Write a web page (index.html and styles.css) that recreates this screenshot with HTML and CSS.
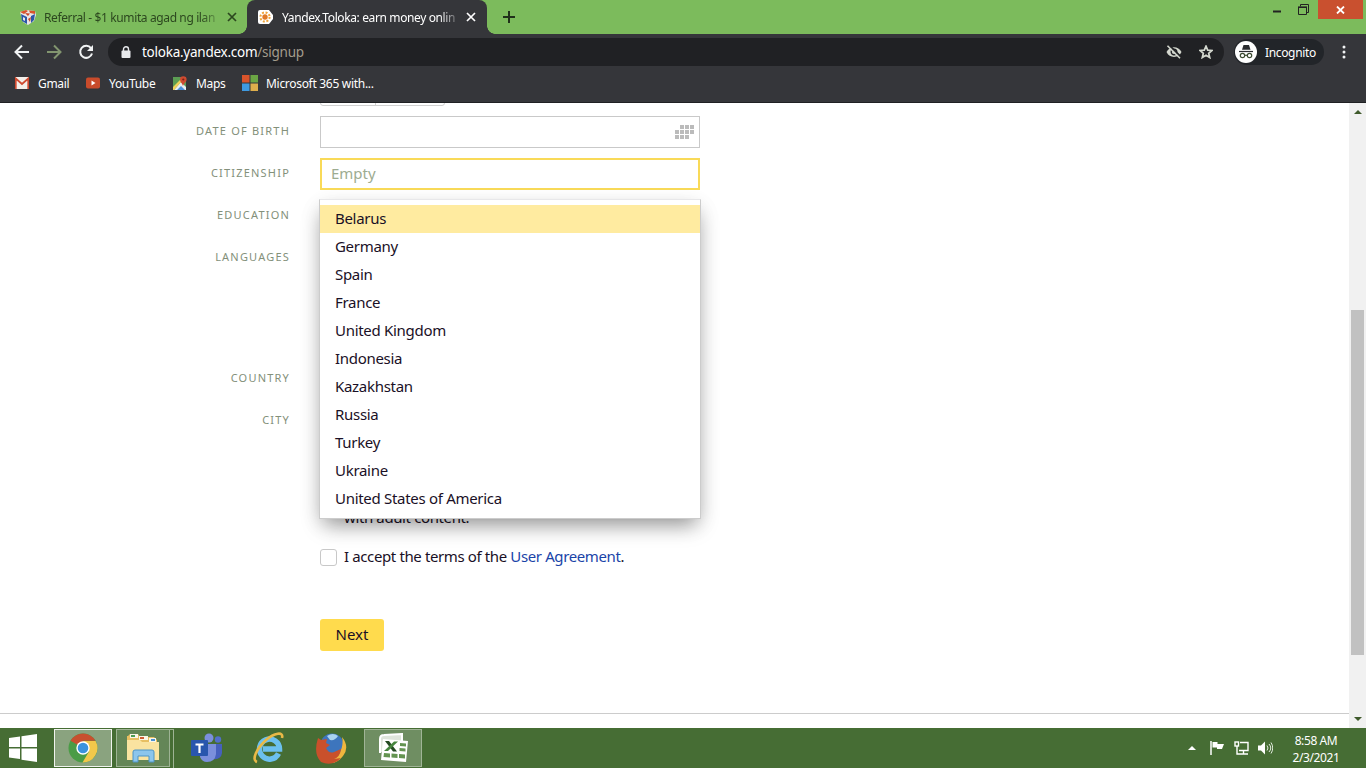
FILE: index.html
```html
<!DOCTYPE html>
<html lang="en">
<head>
    <meta charset="UTF-8">
    <meta name="viewport" content="width=device-width, initial-scale=1.0">
    <title>Yandex.Toloka: earn money online</title>
    <link rel="stylesheet" href="styles.css">
</head>
<body>
    <div class="tabstrip">
        <div class="tab">
            <svg class="tab-icon" width="16" height="16" viewBox="0 0 16 16">
                <path d="M0 3l6-2 9 1 1 4-2 6-6 4-5-3z" fill="#e9e6e6"/>
                <path d="M0 3l6-2 2 1-4 3zM9 1.500l6 .5v3l-5-1z" fill="#d9542b"/>
                <path d="M1 5l6 3v7l-5-3zM11 7l4-2-1 6-3 3z" fill="#2b57a8"/>
                <path d="M5 4l5 .5L8 7zM8 10l3-2-1 5z" fill="#c9472b"/>
                <path d="M3 8l2 1v3l-2-1z" fill="#e9e6e6"/>
            </svg>
            <span class="tab-title">Referral - $1 kumita agad ng ilan</span>
            <svg class="tab-close" width="10" height="10" viewBox="0 0 10 10"><path d="M1 1l8 8M9 1l-8 8"/></svg>
        </div>
        <div class="tab active">
            <svg class="tab-icon" width="16" height="16" viewBox="0 0 16 16">
                <path d="M2 1h9l4 5v4l-4 5H2a2 2 0 0 1-2-2V3a2 2 0 0 1 2-2z" fill="#fff"/>
                <circle cx="7" cy="8" r="4.6" fill="none" stroke="#f0a43a" stroke-width="2" stroke-dasharray="2 1.61"/>
                <circle cx="7" cy="8" r="2.7" fill="#e07a28"/>
            </svg>
            <span class="tab-title">Yandex.Toloka: earn money onlin</span>
            <svg class="tab-close" width="10" height="10" viewBox="0 0 10 10"><path d="M1 1l8 8M9 1l-8 8"/></svg>
        </div>
        <svg class="new-tab" width="12" height="12" viewBox="0 0 12 12"><path d="M6 0v12M0 6h12"/></svg>
        <div class="window-buttons">
            <svg class="win-min" width="8" height="3" viewBox="0 0 8 3"><path d="M0 1.5h8" stroke="#222" stroke-width="2"/></svg>
            <svg class="win-restore" width="11" height="11" viewBox="0 0 11 11">
                <path d="M2.5 2.5v-2h8v8h-2" fill="none" stroke="#222"/>
                <path d="M.5 3.5h8v7h-8z" fill="none" stroke="#222"/>
                <path d="M0 3.2h9" stroke="#222" stroke-width="1.6"/>
            </svg>
            <div class="win-close">
                <svg width="9" height="8" viewBox="0 0 9 8"><path d="M1 .5l7 7M8 .5l-7 7" stroke="#fff" stroke-width="1.8"/></svg>
            </div>
        </div>
    </div>

    <div class="toolbar">
        <svg class="nav-back" width="16" height="16" viewBox="0 0 16 16"><path d="M15 8H2M8 1.5L1.5 8 8 14.5"/></svg>
        <svg class="nav-forward" width="16" height="16" viewBox="0 0 16 16"><path d="M1 8h13M8 1.5L14.5 8 8 14.5"/></svg>
        <svg class="nav-reload" width="16" height="16" viewBox="0 0 16 16">
            <path d="M13 4.2A6 6 0 1 0 14 9.5"/>
            <path d="M15 1v6H9z" fill="#f1f3f4" stroke="none"/>
        </svg>
        <div class="omnibox">
            <svg class="lock" width="10" height="12" viewBox="0 0 10 12">
                <path d="M2.5 5V3.3a2.5 2.5 0 0 1 5 0V5" fill="none" stroke="#e8eaed" stroke-width="1.4"/>
                <rect x="0.5" y="4.500" width="9" height="7.500" rx="1" fill="#e8eaed"/>
            </svg>
            <span class="url">toloka.yandex.com<span class="path">/signup</span></span>
            <svg class="eye" width="16" height="14" viewBox="0 0 16 14">
                <path d="M.5 7c3-6.500 12-6.500 15 0-3 6.500-12 6.500-15 0z" fill="#d4d8cf"/>
                <circle cx="8" cy="7" r="2.8" fill="none" stroke="#202124" stroke-width="1.400"/>
                <path d="M3 0l12 12" stroke="#202124" stroke-width="1.8"/>
                <path d="M1.5 .8l12.500 12.500" stroke="#d4d8cf" stroke-width="1.6"/>
            </svg>
            <svg class="star" width="14" height="14" viewBox="0 0 14 14">
                <path d="M7 1.200l1.700 4 4.300.3-3.300 2.800 1 4.200L7 10.200l-3.700 2.300 1-4.200L1 5.500l4.300-.3z"/>
            </svg>
        </div>
        <div class="incognito">
            <svg width="22" height="22" viewBox="0 0 22 22">
                <circle cx="11" cy="11" r="11" fill="#fff"/>
                <path d="M7 8.800L8.500 4h5.500l1.500 4.800z" fill="#2a2c2f"/>
                <path d="M4 10.500h14" stroke="#2a2c2f" stroke-width="1.200"/>
                <g fill="none" stroke="#3e4d33" stroke-width="1.200">
                    <circle cx="7.500" cy="14.500" r="2.200"/>
                    <circle cx="14.500" cy="14.500" r="2.200"/>
                    <path d="M9.700 14.300h2.600"/>
                </g>
            </svg>
            <span>Incognito</span>
        </div>
        <svg class="menu" width="4" height="14" viewBox="0 0 4 14">
            <circle cx="2" cy="2" r="1.500"/><circle cx="2" cy="7" r="1.500"/><circle cx="2" cy="12" r="1.500"/>
        </svg>
    </div>

    <div class="bookmarks">
        <div class="bookmark">
            <svg width="16" height="12" viewBox="0 0 16 12">
                <rect x="1" width="14" height="12" rx="1" fill="#f3efe9"/>
                <path d="M1.800 12V1.500L8 7l6.200-5.500V12" fill="none" stroke="#cf4a30" stroke-width="1.700"/>
            </svg>
            <span class="w-gmail">Gmail</span>
        </div>
        <div class="bookmark">
            <svg width="16" height="12" viewBox="0 0 16 12">
                <rect x="1" y=".5" width="14" height="11" rx="2" fill="#c94b2b"/>
                <path d="M6.500 3.500L10.500 6l-4 2.500z" fill="#fff"/>
            </svg>
            <span class="w-youtube">YouTube</span>
        </div>
        <div class="bookmark">
            <svg width="16" height="15" viewBox="0 0 16 15">
                <rect x="1" y="1" width="13" height="13" fill="#5c9d53"/>
                <path d="M2 14L9 6l5 5v3z" fill="#e9edf0"/>
                <path d="M1 11l8-8 1.500 1.500L2 14H1z" fill="#f0d15a"/>
                <path d="M5 14l4-4 4 4z" fill="#4a90d9"/>
                <path d="M11 10C10 7 8 6 8 3.500a3.300 3.300 0 0 1 6.600 0C14.600 6 12 7 11 10z" fill="#cf4a30"/>
                <circle cx="11.300" cy="3.500" r="1.100" fill="#7c2213"/>
            </svg>
            <span class="w-maps">Maps</span>
        </div>
        <div class="bookmark">
            <svg width="16" height="16" viewBox="0 0 16 16">
                <rect width="7.500" height="7.500" fill="#d9542b"/>
                <rect x="8.500" width="7.500" height="7.500" fill="#6ba544"/>
                <rect y="8.500" width="7.500" height="7.500" fill="#3f9ae0"/>
                <rect x="8.500" y="8.500" width="7.500" height="7.500" fill="#dfae4c"/>
            </svg>
            <span>Microsoft 365 with...</span>
        </div>
    </div>

    <div class="viewport">
        <div class="page">
            <form class="signup">
                <div class="row">
                    <span class="label"></span>
                    <div class="gender"><i></i><i></i></div>
                </div>
                <div class="row">
                    <span class="label">DATE OF BIRTH</span>
                    <div class="field">
                        <svg width="19" height="14" viewBox="0 0 19 14" fill="#bbb">
                            <path d="M5 0h4v4H5zM10 0h4v4h-4zM15 0h4v4h-4zM0 5h4v4H0zM5 5h4v4H5zM10 5h4v4h-4zM15 5h4v4h-4zM0 10h4v4H0zM5 10h4v4H5zM10 10h4v4h-4z"/>
                        </svg>
                    </div>
                </div>
                <div class="row">
                    <span class="label">CITIZENSHIP</span>
                    <div class="field focused">
                        <span class="placeholder">Empty</span>
                        <ul class="dropdown">
                            <li class="selected">Belarus</li>
                            <li>Germany</li>
                            <li>Spain</li>
                            <li>France</li>
                            <li>United Kingdom</li>
                            <li>Indonesia</li>
                            <li>Kazakhstan</li>
                            <li>Russia</li>
                            <li>Turkey</li>
                            <li>Ukraine</li>
                            <li>United States of America</li>
                        </ul>
                    </div>
                </div>
                <div class="row"><span class="label">EDUCATION</span></div>
                <div class="row languages"><span class="label">LANGUAGES</span></div>
                <div class="row"><span class="label">COUNTRY</span></div>
                <div class="row"><span class="label">CITY</span></div>
                <div class="agreements">
                    <p class="adult">with adult content.</p>
                    <label class="accept"><span class="box"></span><span>I accept the terms of the <a>User Agreement</a>.</span></label>
                    <button type="button" class="next">Next</button>
                </div>
            </form>
            <div class="footer"></div>
        </div>
        <div class="scrollbar">
            <svg width="8" height="4" viewBox="0 0 8 4"><path d="M0 4l4-4 4 4z"/></svg>
            <div class="thumb"></div>
            <svg width="8" height="4" viewBox="0 0 8 4"><path d="M0 0h8L4 4z"/></svg>
        </div>
    </div>

    <div class="taskbar">
        <div class="start">
            <svg width="28" height="28" viewBox="0 0 28 28" fill="#fff">
                <path d="M0 4l11-1.600V13H0zM12.500 2.200L28 0v13H12.500zM0 14.500h11V25L0 23.500zM12.500 14.500H28V28l-15.500-2.300z"/>
            </svg>
        </div>
        <div class="task current">
            <svg width="30" height="30" viewBox="0 0 30 30">
                <circle cx="15" cy="15" r="14.500" fill="#4a9c46"/>
                <path d="M15 15L2.500 7.700A14.500 14.500 0 0 1 27.500 7.800H15z" fill="#c8502f"/>
                <path d="M15 8h12.600A14.500 14.500 0 0 1 14.500 29.500L21 18.500z" fill="#f2c84b"/>
                <circle cx="15" cy="15" r="6.700" fill="#fff"/>
                <circle cx="15" cy="15" r="5.300" fill="#3b93dd"/>
            </svg>
        </div>
        <div class="task stacked">
            <svg width="34" height="30" viewBox="0 0 34 30">
                <path d="M2 3l2-2h8l2 3h14l3 3v20H1V3z" fill="#e8bf62"/>
                <path d="M4 1h8v4H4zM13 3h9v4h-9zM23 5h7v4h-7z" fill="#fbf6e8"/>
                <path d="M5 2h4v2H5z" fill="#4c9d52"/>
                <path d="M14 4h4v2h-4z" fill="#cf5c35"/>
                <path d="M25 6h4v2h-4z" fill="#4b91d2"/>
                <path d="M1 7h13l2 2h17v18H1z" fill="#fae3a0"/>
                <path d="M7 29V19q0-2 2-2h17q2 0 2 2v10h-5v-6H12v6z" fill="#8cc5ec" stroke="#4c94c6"/>
            </svg>
        </div>
        <div class="task">
            <svg width="32" height="30" viewBox="0 0 32 30">
                <circle cx="18" cy="5" r="4.500" fill="#7b8fdc"/>
                <circle cx="27" cy="6.500" r="3.200" fill="#526fc9"/>
                <path d="M22 11h9v9q-1 7-9 6z" fill="#4660bd"/>
                <path d="M10 11h15v10q-1 8-9 8-5 0-7-5z" fill="#7b8fdc"/>
                <rect y="7" width="17" height="16" rx="1" fill="#2956ad"/>
                <path d="M4.500 11.500h8M8.500 11.500V20" stroke="#fff" stroke-width="2.200"/>
            </svg>
        </div>
        <div class="task">
            <svg width="32" height="32" viewBox="0 0 32 32">
                <path d="M25.500 21.500A10 10 0 1 1 26.500 17H10" fill="none" stroke="#6cc0ef" stroke-width="5.500"/>
                <path d="M4 30C-2 28 4 16 13 8 21 1 31-1 29 6" fill="none" stroke="#eab947" stroke-width="2.600"/>
            </svg>
        </div>
        <div class="task">
            <svg width="32" height="32" viewBox="0 0 32 32">
                <circle cx="17" cy="13" r="11.500" fill="#3d75bd"/>
                <path d="M12 4q6-4 11 0-3 5-8 4z" fill="#a9d2ef"/>
                <path d="M27 5q8 10 1 19-6 8-14 7l10-9q5-8 3-17z" fill="#efb63e"/>
                <path d="M3 6l3 2 6-1-1 4 4 2-4 3q3 6 8 4l7-3q-1 8-7 10l7-1q-9 9-20 4-8-8-3-24z" fill="#c9502b"/>
            </svg>
        </div>
        <div class="task open">
            <svg width="30" height="30" viewBox="0 0 30 30">
                <path d="M2 20V6q0-4 4-4l18-1v9" fill="#dfe5db" stroke="#fff" stroke-width="2"/>
                <path d="M5 6l25 2-2 21-25-2z" fill="#fff"/>
                <path d="M22 10l6 .5v3l-6-.5zM21.500 15l6 .5v3l-6-.5zM21 21l6 .5v4l-6-.5zM13.500 20.500l6 .5v4l-6-.5zM6 20l6 .5v4L5.500 24z" fill="#649451"/>
                <path d="M7 8h4l8 10.500h-4z" fill="#244a22"/>
                <path d="M16 8.500h4L10 18H6z" fill="#47863f"/>
            </svg>
        </div>
        <div class="tray">
            <svg class="tray-up" width="8" height="4" viewBox="0 0 8 4"><path d="M0 4l4-4 4 4z" fill="#fff"/></svg>
            <svg class="tray-flag" width="15" height="14" viewBox="0 0 15 14">
                <path d="M1 0v14" stroke="#fff" stroke-width="1.500"/>
                <path d="M2.500 1h5v2H14l-2 5H7V6.500H2.500z" fill="#fff"/>
            </svg>
            <svg class="tray-net" width="15" height="14" viewBox="0 0 15 14" fill="none" stroke="#fff" stroke-width="1.400">
                <path d="M6 1.500h8v8H5M9.500 9.500V13M6 13h8M3 5v8h3"/>
                <rect x="1" y="1" width="3.500" height="4"/>
            </svg>
            <svg class="tray-sound" width="15" height="14" viewBox="0 0 15 14">
                <path d="M0 4.500h3L7 .5v13L3 9.500H0z" fill="#fff"/>
                <path d="M9 4.500q2 2.500 0 5M11 3q3.500 4 0 8M13 1.500q3.500 5.500 0 11" fill="none" stroke="#e3ebdf" stroke-width="1"/>
            </svg>
        </div>
        <div class="clock"><span>8:58 AM</span><span>2/3/2021</span></div>
    </div>
</body>
</html>
```
FILE: styles.css
```css
* {
    box-sizing: border-box;
}

body {
    margin: 0;
    width: 1366px;
    height: 768px;
    overflow: hidden;
    display: flex;
    flex-direction: column;
    font-family: "Noto Sans", sans-serif;
    background: #fff;
}

svg {
    display: block;
    flex: none;
}

/* browser chrome */
.tabstrip {
    height: 34px;
    flex: none;
    display: flex;
    background: #7cbb5c;
}

.tab {
    width: 247px;
    padding: 0 10px 0 20px;
    display: flex;
    align-items: center;
    font-size: 12px;
    letter-spacing: -0.38px;
    color: #2c471f;
}

.tab.active {
    position: relative;
    width: 240px;
    padding: 0 11px;
    background: #35363a;
    border-radius: 8px 8px 0 0;
    color: #fff;
}

/* flared bottom corners of the open tab */
.tab.active::before,
.tab.active::after {
    content: "";
    position: absolute;
    bottom: 0;
    width: 8px;
    height: 8px;
}

.tab.active::before {
    left: -8px;
    background: radial-gradient(circle at 0 0, transparent 7.5px, #35363a 8px);
}

.tab.active::after {
    right: -8px;
    background: radial-gradient(circle at 100% 0, transparent 7.5px, #35363a 8px);
}

.tab-title {
    width: 175px;
    margin-left: 8px;
    white-space: nowrap;
    -webkit-mask-image: linear-gradient(to right, #000 90%, rgba(0, 0, 0, 0.2));
}

.tab-close {
    margin-left: auto;
    stroke: currentColor;
    stroke-width: 1.7;
}

.new-tab {
    margin: 11px 0 0 16px;
    stroke: #20301a;
    stroke-width: 2;
}

.window-buttons {
    margin-left: auto;
    display: flex;
    align-items: flex-start;
}

.win-min {
    margin: 10px 17px 0 0;
}

.win-restore {
    margin: 4px 9px 0 0;
}

.win-close {
    width: 45px;
    height: 19px;
    margin-right: 3px;
    display: flex;
    align-items: center;
    justify-content: center;
    background: #c9502f;
}

.toolbar {
    height: 36px;
    flex: none;
    display: flex;
    align-items: center;
    padding-left: 14px;
    background: #35363a;
}

.nav-back,
.nav-forward,
.nav-reload {
    margin-right: 16px;
    fill: none;
    stroke: #f1f3f4;
    stroke-width: 2;
}

.nav-forward {
    stroke: #82956f;
}

.nav-reload {
    margin-right: 14px;
}

.omnibox {
    width: 1116px;
    height: 28px;
    display: flex;
    align-items: center;
    padding: 0 11px 0 13px;
    border-radius: 14px;
    background: #202124;
}

.url {
    margin: -1px 0 0 11px;
    font-size: 13.5px;
    letter-spacing: -0.25px;
    color: #fff;
}

.url .path {
    color: #a39c8c;
}

.eye {
    margin-left: auto;
    margin-right: 17px;
}

.star {
    fill: none;
    stroke: #d4d8cf;
    stroke-width: 1.7;
}

.incognito {
    width: 90px;
    height: 26px;
    margin-left: 10px;
    padding-left: 1px;
    display: flex;
    align-items: center;
    gap: 8px;
    border-radius: 13px;
    background: #222529;
    color: #fff;
    font-size: 12px;
    letter-spacing: -0.35px;
}

.menu {
    margin-left: 18px;
    fill: #f1f3f4;
}

.bookmarks {
    height: 33px;
    flex: none;
    display: flex;
    padding: 0 0 6px 14px;
    background: #35363a;
    border-bottom: 1px solid #1f2023;
    color: #fff;
    font-size: 12px;
    letter-spacing: -0.3px;
}

.bookmark {
    display: flex;
    align-items: center;
    gap: 8px;
}

.w-gmail {
    width: 47px;
}

.w-youtube {
    width: 63px;
}

.w-maps {
    width: 46px;
}

/* signup page */
.viewport {
    height: 625px;
    flex: none;
    display: flex;
    overflow: hidden;
}

.page {
    width: 1349px;
    height: 625px;
    overflow: hidden;
    display: flex;
    flex-direction: column;
    font-size: 15px;
    color: #1a1026;
}

.signup {
    height: 610px;
    flex: none;
    margin: 0;
    overflow: hidden;
    display: flex;
    flex-direction: column;
    justify-content: flex-end;
}

.row {
    height: 32px;
    flex: none;
    margin-bottom: 10px;
    display: grid;
    grid-template-columns: 290px 380px;
    column-gap: 30px;
}

.row.languages {
    height: 111px;
}

.label {
    text-align: right;
    font-size: 11px;
    line-height: 30px;
    letter-spacing: 1.2px;
    color: #83907a;
}

.gender {
    width: 125px;
    display: flex;
    border: 1px solid #d0d0d0;
    border-radius: 3px;
}

.gender i {
    width: 55px;
    border-right: 1px solid #d0d0d0;
}

.gender i:last-child {
    border: none;
}

.field {
    display: flex;
    align-items: center;
    justify-content: flex-end;
    padding-right: 5px;
    border: 1px solid #c9c9c9;
}

.field.focused {
    position: relative;
    justify-content: flex-start;
    padding-left: 9px;
    border: 2px solid #f9da58;
}

.placeholder {
    margin-top: -2px;
    color: #9dac91;
}

.dropdown {
    position: absolute;
    top: 39px;
    left: -3px;
    width: 382px;
    margin: 0;
    padding: 5px 0;
    list-style: none;
    background: #fff;
    border: 1px solid #ccc;
    border-top-color: #e8e8ea;
    box-shadow: 0 10px 20px -5px rgba(0, 0, 0, 0.4), 0 6px 20px rgba(0, 0, 0, 0.08);
}

.dropdown li {
    height: 28px;
    padding-left: 15px;
    line-height: 27px;
    letter-spacing: -0.3px;
}

.dropdown .selected {
    background: #ffeba0;
}

.agreements {
    width: 380px;
    height: 266px;
    flex: none;
    margin-left: 320px;
    padding-top: 60px;
    line-height: 20px;
    letter-spacing: -0.38px;
}

.adult {
    margin: 0 0 19px 24px;
}

.accept {
    display: flex;
    align-items: center;
    gap: 7px;
    white-space: nowrap;
}

.box {
    width: 17px;
    height: 17px;
    margin-top: 2px;
    border: 1px solid #c8c8c8;
    border-radius: 3px;
}

.accept a {
    color: #1a44a8;
}

.next {
    display: block;
    width: 64px;
    height: 32px;
    margin-top: 53px;
    padding: 0 0 2px;
    border: none;
    border-radius: 3px;
    background: #ffdb4d;
    color: #1a1026;
    font: inherit;
}

.footer {
    border-top: 1px solid #ccc;
}

.scrollbar {
    width: 17px;
    display: flex;
    flex-direction: column;
    align-items: center;
    padding: 7px 0;
    background: #f1f1f1;
    fill: #3f5a2c;
}

.thumb {
    width: 13px;
    height: 345px;
    margin: 196px 0 auto;
    background: #c1c1c1;
}

/* windows taskbar */
.taskbar {
    height: 40px;
    flex: none;
    display: flex;
    align-items: center;
    background: #466d34;
    color: #fff;
}

.start {
    width: 53px;
    padding: 0 0 0 9px;
}

.task {
    width: 58px;
    height: 38px;
    margin-right: 4px;
    display: flex;
    align-items: center;
    justify-content: center;
}

.task.current {
    margin-left: 1px;
    background: #8aa37f;
    border: 1px solid #f0f3ee;
}

.task.open {
    background: #6f8e62;
    border: 1px solid #a0b496;
}

.task.stacked {
    position: relative;
    width: 54px;
    margin-right: 8px;
    background: #648657;
    border: 1px solid #9eb394;
}

.task.stacked::after {
    content: "";
    position: absolute;
    top: -1px;
    right: -5px;
    width: 4px;
    height: 38px;
    border: 1px solid #9eb394;
    border-left: none;
}

.tray {
    margin-left: auto;
    display: flex;
    align-items: center;
}

.tray-up {
    margin-right: 14px;
}

.tray-flag {
    margin-right: 9px;
}

.tray-net {
    margin-right: 9px;
}

.clock {
    width: 93px;
    padding: 2px 7px 0 0;
    display: flex;
    flex-direction: column;
    align-items: center;
    font-size: 12px;
    line-height: 17px;
    letter-spacing: -0.4px;
}
```
